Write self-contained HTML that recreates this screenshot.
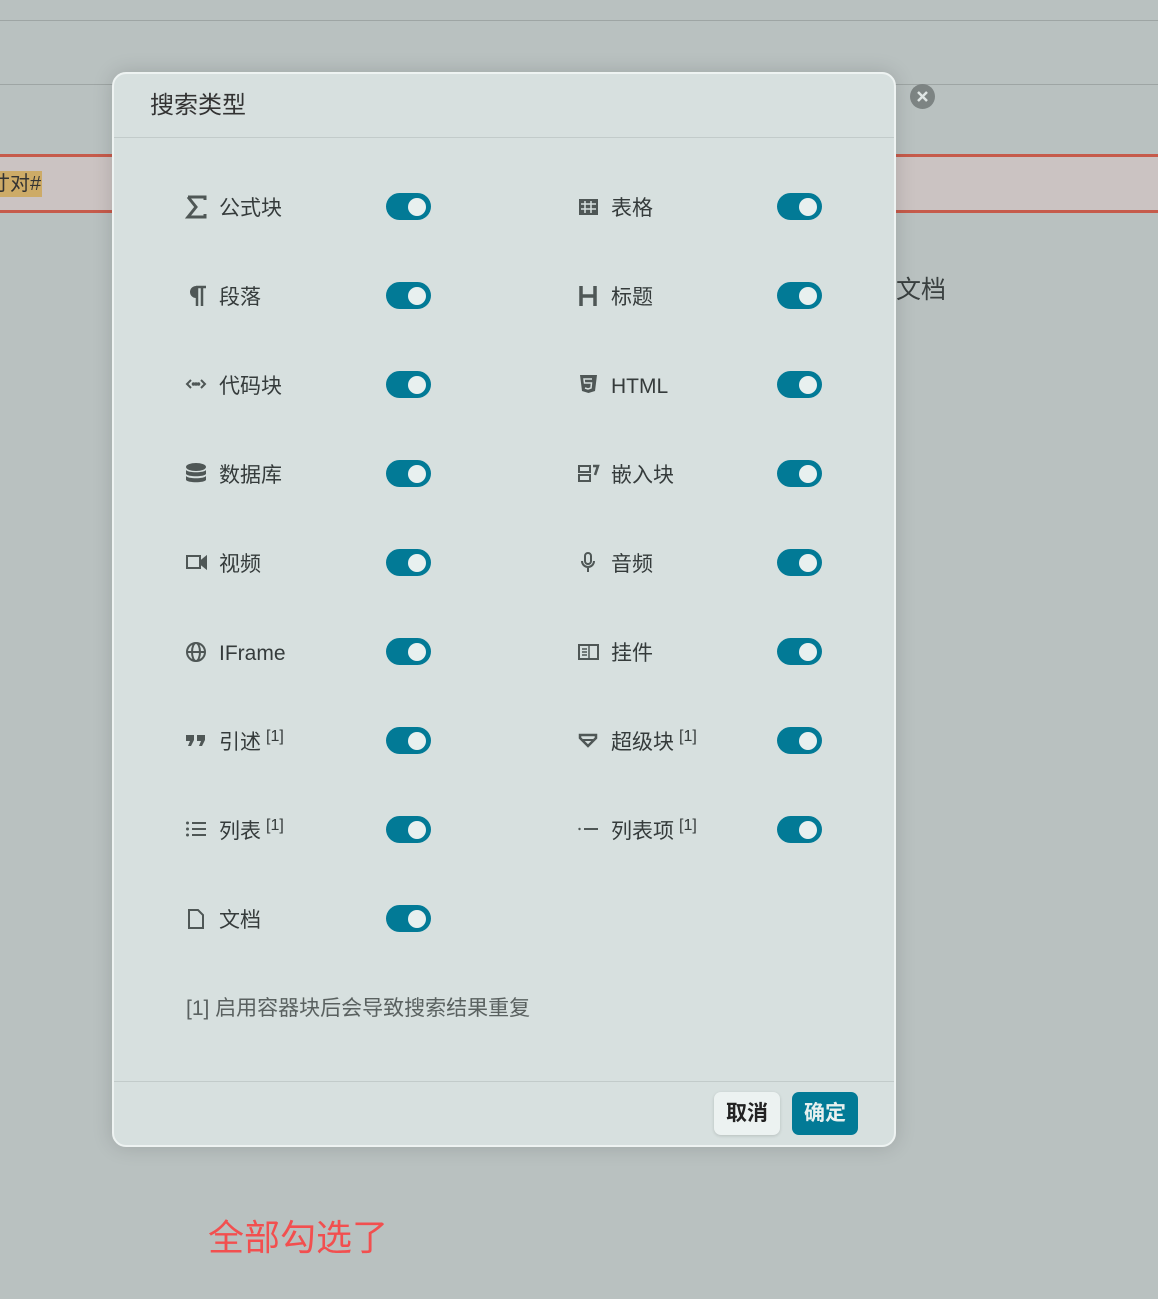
<!DOCTYPE html>
<html><head><meta charset="utf-8">
<style>
*{margin:0;padding:0;box-sizing:border-box}
body{width:1158px;height:1299px;background:#b9c1c0;position:relative;overflow:hidden;font-family:"Liberation Sans","Noto Sans CJK SC",sans-serif;color:#353b3b}
.abs{position:absolute}
.modal{position:absolute;left:112px;top:72px;width:784px;height:1075px;background:#d7e0df;border:2px solid #eef3f2;border-radius:14px;box-shadow:0 0 20px rgba(0,0,0,.15)}
.lbl{position:absolute;font-size:21px;line-height:26px;white-space:nowrap}
.lbl sup{font-size:16px;vertical-align:0;position:relative;top:-8px;margin-left:5px}
.tg{position:absolute;width:45px;height:27px;border-radius:14px;background:#027a96}
.tg::after{content:"";position:absolute;right:5px;top:4.5px;width:18px;height:18px;border-radius:50%;background:#e8f0ef}
.L{margin-top:2px}
</style></head><body>
<div class="abs" style="left:0;top:20px;width:1158px;height:1px;background:#9ea5a4"></div>
<div class="abs" style="left:0;top:84px;width:1158px;height:1px;background:#9ea5a4"></div>
<div class="abs" style="left:0;top:154px;width:1158px;height:59px;background:#cbc3c2;border-top:3px solid #c65b4b;border-bottom:3px solid #c65b4b"></div>
<div class="abs" style="left:0;top:171px;height:26px;width:42px;background:#cdab67;overflow:hidden"><div style="position:absolute;left:-10px;top:0;white-space:nowrap;font-size:20px;line-height:26px;color:#333">寸对#</div></div>
<div class="abs" style="left:910px;top:84px;width:25px;height:25px;border-radius:50%;background:#7d8483"></div>
<svg class="abs" style="left:910px;top:84px" width="25" height="25"><path d="M8 8l9 9M17 8l-9 9" stroke="#dfe5e4" stroke-width="2.5"/></svg>
<div class="abs" style="left:896px;top:274px;font-size:25px;line-height:32px;color:#3a4040">文档</div>
<div class="abs" style="left:208px;top:1216px;font-size:36px;line-height:44px;color:#f24f4f">全部勾选了</div>

<div class="modal">
<div class="abs" style="left:36px;top:17px;font-size:24px;line-height:30px;color:#333">搜索类型</div>
<div class="abs" style="left:0;top:63px;width:780px;height:1px;background:#c2cbca"></div>
<div class="abs" style="left:0;top:1007px;width:780px;height:1px;background:#c2cbca"></div>
<div class="abs" style="left:600px;top:1018px;width:66px;height:43px;border-radius:7px;background:#ecf2f1;font-size:21px;font-weight:bold;line-height:43px;text-align:center;color:#222;box-shadow:0 1px 3px rgba(0,0,0,.15)">取消</div>
<div class="abs" style="left:678px;top:1018px;width:66px;height:43px;border-radius:7px;background:#027a96;font-size:21px;font-weight:bold;line-height:43px;text-align:center;color:#e8f0ef">确定</div>
<div class="lbl" style="left:72px;top:922px;color:#5a6160">[1] 启用容器块后会导致搜索结果重复</div>
</div>

<svg class="abs" style="left:0;top:0" width="1158" height="1299" fill="none" stroke="#4f5756" stroke-width="2">
<path d="M188 197h17v3M188 197l8 10-8 10h17v-3" stroke-width="3"/>
<path d="M196 287h10M197 287v19M202 287v19" stroke-width="2.5"/><path d="M196 287a5 5 0 0 0 0 10z" fill="#4f5756"/>
<path d="M191 380l-4 4 4 4M201 380l4 4-4 4"/><circle cx="193.5" cy="384" r=".8" fill="#4f5756"/><circle cx="196" cy="384" r=".8" fill="#4f5756"/><circle cx="198.5" cy="384" r=".8" fill="#4f5756"/>
<g fill="#4f5756" stroke="none"><ellipse cx="196" cy="467" rx="10" ry="4"/><path d="M186 470c2 3 18 3 20 0v4c-2 3-18 3-20 0z"/><path d="M186 476c2 3 18 3 20 0v4c-2 3-18 3-20 0z"/></g>
<rect x="187" y="556" width="13" height="12"/><path d="M201 561l5-4v11l-5-4z" fill="#4f5756"/>
<circle cx="196" cy="652" r="9"/><ellipse cx="196" cy="652" rx="4" ry="9"/><path d="M187 652h18"/>
<g fill="#4f5756" stroke="none"><path d="M186 735h8v5l-3 6h-3l2-5h-4zM197 735h8v5l-3 6h-3l2-5h-4z"/></g>
<g fill="#4f5756" stroke="none"><circle cx="187.5" cy="823" r="1.5"/><circle cx="187.5" cy="829" r="1.5"/><circle cx="187.5" cy="835" r="1.5"/></g><path d="M192 823h14M192 829h14M192 835h14"/>
<path d="M189 910h9l5 5v13h-14z"/>
<rect x="579" y="199" width="19" height="16" fill="#4f5756" stroke="none"/><path d="M581 204h15M581 209h15M585 201v12M591 201v12" stroke="#d7e0df" stroke-width="1.5"/>
<path d="M581 286v20M595 286v20M581 296h14" stroke-width="3.5"/>
<path d="M580 375h17l-2 16-6.5 2-6.5-2z" fill="#4f5756" stroke="none"/><path d="M592 379h-8l.5 4h7l-.5 5-3 1-3-1" stroke="#d7e0df" stroke-width="1.5"/>
<rect x="579" y="466" width="11" height="6"/><rect x="579" y="475" width="11" height="6"/><path d="M593 466h5l-3 9" stroke-width="2.5"/>
<rect x="585" y="553" width="6" height="11" rx="3"/><path d="M582 561a6 6 0 0 0 12 0M588 567v5"/>
<rect x="579" y="645" width="19" height="14"/><path d="M589 645v14M582 649h5M582 652h5M582 655h5" stroke-width="1.5"/>
<path d="M580 735h16v3l-8 8-8-8z" stroke-width="2.5"/><path d="M583 740h10"/>
<circle cx="579.5" cy="829" r="1.2" fill="#4f5756" stroke="none"/><path d="M584 829h14"/>
</svg>

<div class="lbl L" style="left:219px;top:194px">公式块</div>
<div class="lbl L" style="left:219px;top:283px">段落</div>
<div class="lbl L" style="left:219px;top:372px">代码块</div>
<div class="lbl L" style="left:219px;top:461px">数据库</div>
<div class="lbl L" style="left:219px;top:550px">视频</div>
<div class="lbl L" style="left:219px;top:639px">IFrame</div>
<div class="lbl L" style="left:219px;top:728px">引述<sup>[1]</sup></div>
<div class="lbl L" style="left:219px;top:817px">列表<sup>[1]</sup></div>
<div class="lbl L" style="left:219px;top:906px">文档</div>
<div class="lbl L" style="left:611px;top:194px">表格</div>
<div class="lbl L" style="left:611px;top:283px">标题</div>
<div class="lbl L" style="left:611px;top:372px">HTML</div>
<div class="lbl L" style="left:611px;top:461px">嵌入块</div>
<div class="lbl L" style="left:611px;top:550px">音频</div>
<div class="lbl L" style="left:611px;top:639px">挂件</div>
<div class="lbl L" style="left:611px;top:728px">超级块<sup>[1]</sup></div>
<div class="lbl L" style="left:611px;top:817px">列表项<sup>[1]</sup></div>

<div class="tg" style="left:386px;top:193px"></div>
<div class="tg" style="left:386px;top:282px"></div>
<div class="tg" style="left:386px;top:371px"></div>
<div class="tg" style="left:386px;top:460px"></div>
<div class="tg" style="left:386px;top:549px"></div>
<div class="tg" style="left:386px;top:638px"></div>
<div class="tg" style="left:386px;top:727px"></div>
<div class="tg" style="left:386px;top:816px"></div>
<div class="tg" style="left:386px;top:905px"></div>
<div class="tg" style="left:777px;top:193px"></div>
<div class="tg" style="left:777px;top:282px"></div>
<div class="tg" style="left:777px;top:371px"></div>
<div class="tg" style="left:777px;top:460px"></div>
<div class="tg" style="left:777px;top:549px"></div>
<div class="tg" style="left:777px;top:638px"></div>
<div class="tg" style="left:777px;top:727px"></div>
<div class="tg" style="left:777px;top:816px"></div>
</body></html>
